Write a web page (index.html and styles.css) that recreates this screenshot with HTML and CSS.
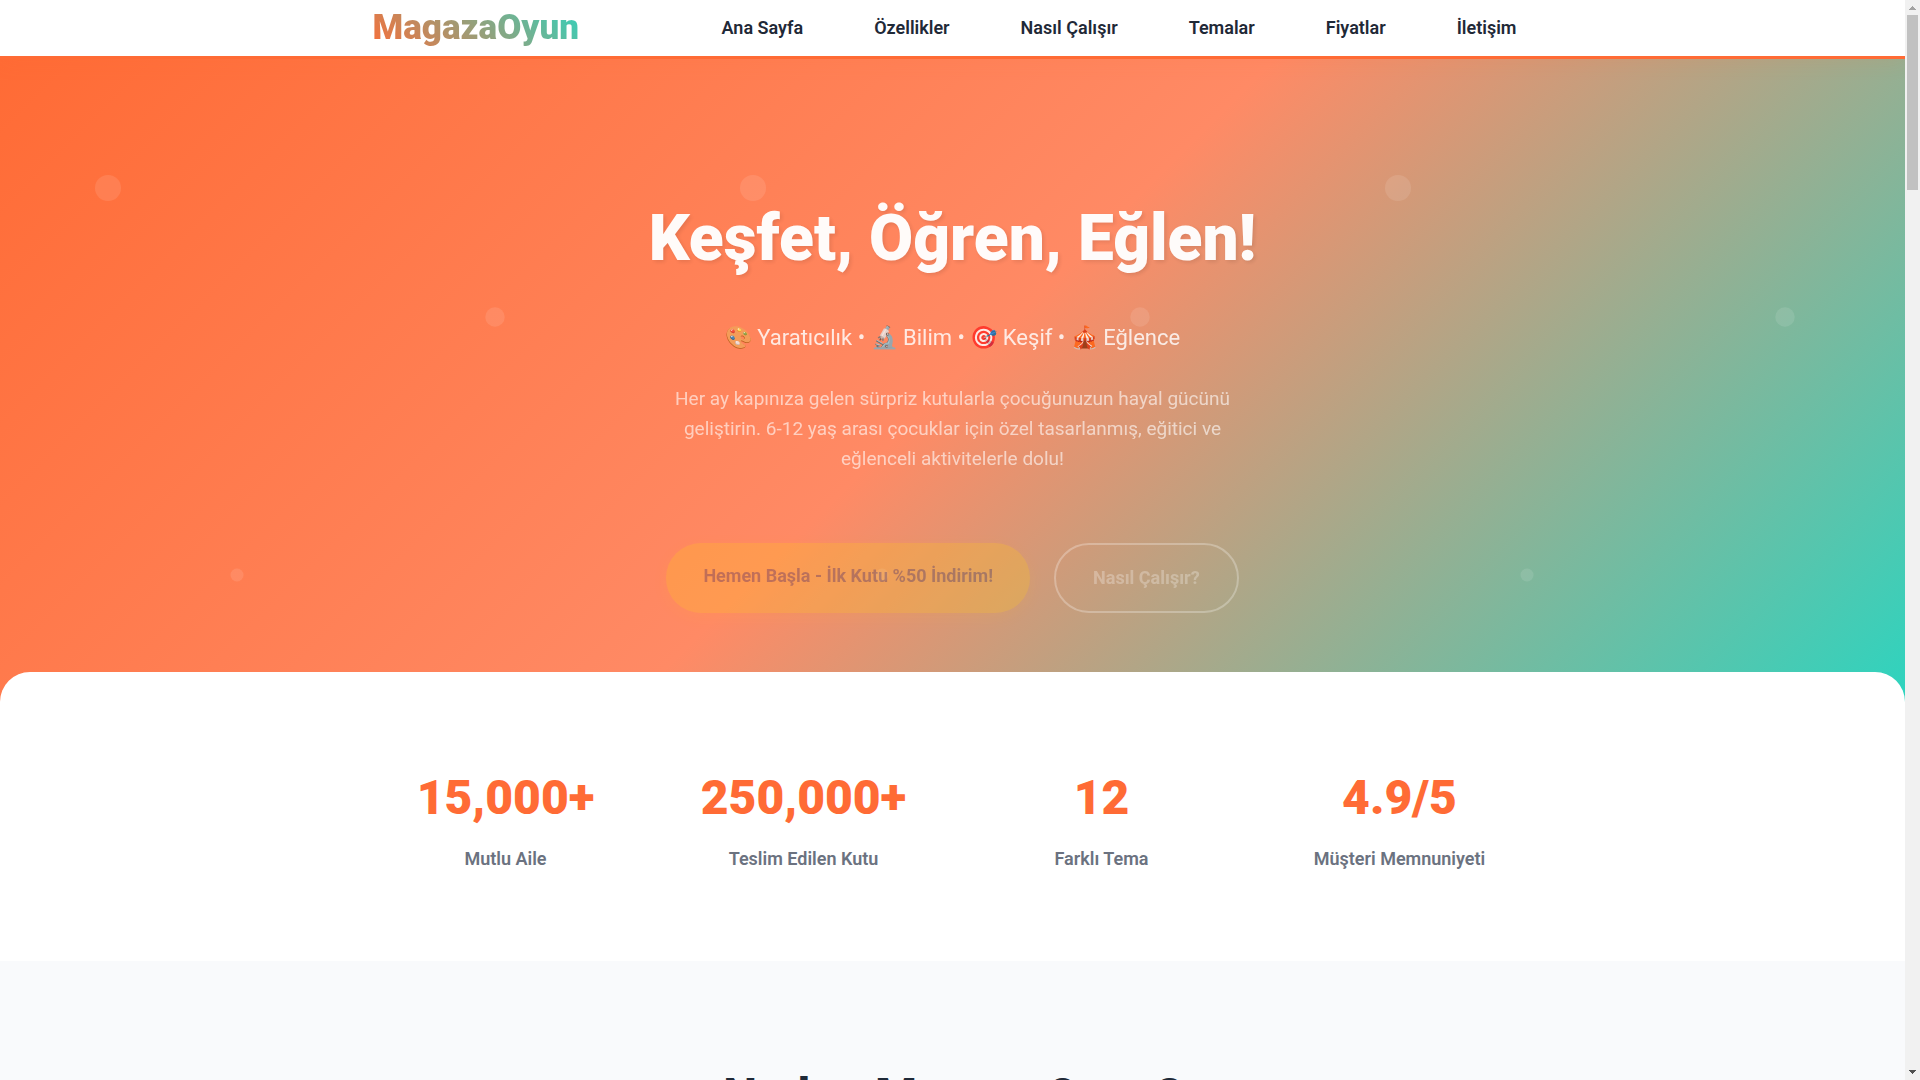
FILE: index.html
```html
<!DOCTYPE html>
<html lang="tr">
<head>
    <meta charset="UTF-8">
    <meta name="viewport" content="width=device-width, initial-scale=1.0">
    <title>MagazaOyun</title>
    <link rel="stylesheet" href="styles.css">
</head>
<body>
    <div class="page">
        <!-- Header -->
        <header class="header">
            <nav class="nav container">
                <a href="#home" class="logo">MagazaOyun</a>
                <ul class="nav-menu">
                    <li><a href="#home">Ana Sayfa</a></li>
                    <li><a href="#features">Özellikler</a></li>
                    <li><a href="#how">Nasıl Çalışır</a></li>
                    <li><a href="#themes">Temalar</a></li>
                    <li><a href="#pricing">Fiyatlar</a></li>
                    <li><a href="#contact">İletişim</a></li>
                </ul>
            </nav>
        </header>

        <!-- Hero -->
        <section class="hero" id="home">
            <svg class="bubbles" aria-hidden="true">
                <defs>
                    <pattern id="dots" x="-21" y="0" width="645" height="645" patternUnits="userSpaceOnUse">
                        <circle cx="129" cy="129" r="13" fill="#fff" fill-opacity="0.1"/>
                        <circle cx="516" cy="258" r="9.7" fill="#fff" fill-opacity="0.1"/>
                        <circle cx="258" cy="516" r="6.5" fill="#fff" fill-opacity="0.1"/>
                    </pattern>
                </defs>
                <rect width="100%" height="100%" fill="url(#dots)"/>
            </svg>
            <div class="hero-content">
                <h1>Keşfet, Öğren, Eğlen!</h1>
                <p class="subtitle">🎨 Yaratıcılık • 🔬 Bilim • 🎯 Keşif • 🎪 Eğlence</p>
                <p class="description">Her ay kapınıza gelen sürpriz kutularla çocuğunuzun hayal gücünü geliştirin. 6-12 yaş arası çocuklar için özel tasarlanmış, eğitici ve eğlenceli aktivitelerle dolu!</p>
                <div class="hero-buttons">
                    <a href="#pricing" class="btn btn-primary">Hemen Başla - İlk Kutu %50 İndirim!</a>
                    <a href="#how" class="btn btn-secondary">Nasıl Çalışır?</a>
                </div>
            </div>
        </section>

        <!-- Stats -->
        <section class="stats">
            <div class="stats-grid container">
                <div class="stat">
                    <div class="stat-number">15,000+</div>
                    <div class="stat-label">Mutlu Aile</div>
                </div>
                <div class="stat">
                    <div class="stat-number">250,000+</div>
                    <div class="stat-label">Teslim Edilen Kutu</div>
                </div>
                <div class="stat">
                    <div class="stat-number">12</div>
                    <div class="stat-label">Farklı Tema</div>
                </div>
                <div class="stat">
                    <div class="stat-number">4.9/5</div>
                    <div class="stat-label">Müşteri Memnuniyeti</div>
                </div>
            </div>
        </section>

        <!-- Features -->
        <section class="features" id="features">
            <h2>Neden MagazaOyun?</h2>
        </section>
    </div>

    <!-- Scrollbar -->
    <div class="scrollbar" aria-hidden="true">
        <svg width="15" height="15"><path d="M7 6h1v1h1v1h1v1h1v1H4V9h1V8h1V7h1z" fill="#a3a3a3"/></svg>
        <div class="track"><div class="thumb"></div></div>
        <svg width="15" height="15"><path d="M4 5h7v1h-1v1H9v1H8v1H7V8H6V7H5V6H4z" fill="#505050"/></svg>
    </div>
</body>
</html>
```
FILE: styles.css
```css
* {
    margin: 0;
    padding: 0;
    box-sizing: border-box;
}
body {
    font-family: Roboto, sans-serif;
    color: #1f2937;
    background-color: white;
    display: flex;
    height: 100vh;
    overflow: hidden;
}
a {
    text-decoration: none;
}
.page {
    flex: 1;
    overflow: hidden;
}
.container {
    max-width: 1200px;
    margin: 0 auto;
    padding: 0 20px;
}

/* Header */
.header {
    position: relative;
    z-index: 2;
    background-color: white;
    border-bottom: 3px solid #ff6b35;
    box-shadow: 0 4px 20px rgba(255, 107, 53, 0.1);
}
.nav {
    display: flex;
    justify-content: space-between;
    align-items: center;
}
.logo {
    font-size: 35px;
    line-height: 56px;
    font-weight: 900;
    background: linear-gradient(45deg, #ff6b35, #2dd4bf);
    -webkit-background-clip: text;
    background-clip: text;
    color: transparent;
}
.nav-menu {
    display: flex;
    gap: 39px;
    list-style: none;
}
.nav-menu a {
    display: block;
    padding: 8px 16px;
    font-size: 18px;
    line-height: 28px;
    font-weight: 600;
    color: #1f2937;
}

/* Hero */
.hero {
    position: relative;
    padding: 140px 20px 91px;
    background: linear-gradient(135deg, #ff6b35 0%, #ff8a65 50%, #2dd4bf 100%);
    color: white;
    text-align: center;
}
.bubbles {
    position: absolute;
    inset: 0;
    width: 100%;
    height: 100%;
}
.hero-content {
    position: relative;
    max-width: 800px;
    margin: 0 auto;
}
.hero h1 {
    margin-bottom: 42px;
    font-size: 64px;
    line-height: 79px;
    font-weight: 900;
    text-shadow: 2px 2px 4px rgba(0, 0, 0, 0.1);
    opacity: 0.97;
}
.subtitle {
    margin-bottom: 28px;
    font-size: 22px;
    line-height: 36px;
    opacity: 0.82;
}
.description {
    max-width: 600px;
    margin: 0 auto 69px;
    font-size: 19px;
    line-height: 30px;
    opacity: 0.6;
}
.hero-buttons {
    display: flex;
    justify-content: center;
    gap: 24px;
    opacity: 0.27;
}
.btn {
    padding: 20px 37px;
    border-radius: 50px;
    font-size: 18px;
    line-height: 26px;
    font-weight: 700;
}
.btn-primary {
    background-color: #ffc61f;
    color: #1f2937;
    box-shadow: 0 4px 15px rgba(255, 193, 7, 0.3);
}
.btn-secondary {
    border: 2px solid white;
    color: white;
}

/* Stats */
.stats {
    position: relative;
    margin-top: -32px;
    padding: 64px 0;
    background-color: white;
    border-radius: 30px 30px 0 0;
}
.stats-grid {
    display: grid;
    grid-template-columns: repeat(4, 1fr);
    gap: 32px;
    text-align: center;
}
.stat {
    padding: 24px 0;
}
.stat-number {
    margin-bottom: 10px;
    font-size: 48px;
    line-height: 75px;
    font-weight: 900;
    color: #ff6b35;
}
.stat-label {
    font-size: 18px;
    line-height: 28px;
    font-weight: 600;
    color: #6b7280;
}

/* Features */
.features {
    padding: 96px 20px;
    background-color: #f9fafc;
    text-align: center;
}
.features h2 {
    font-size: 48px;
    line-height: 77px;
    font-weight: 800;
}

/* Scrollbar */
.scrollbar {
    display: flex;
    flex-direction: column;
    width: 15px;
    background-color: #f1f1f1;
}
.track {
    flex: 1;
    padding: 0 2px;
}
.thumb {
    height: 175px;
    background-color: #c1c1c1;
}
```
